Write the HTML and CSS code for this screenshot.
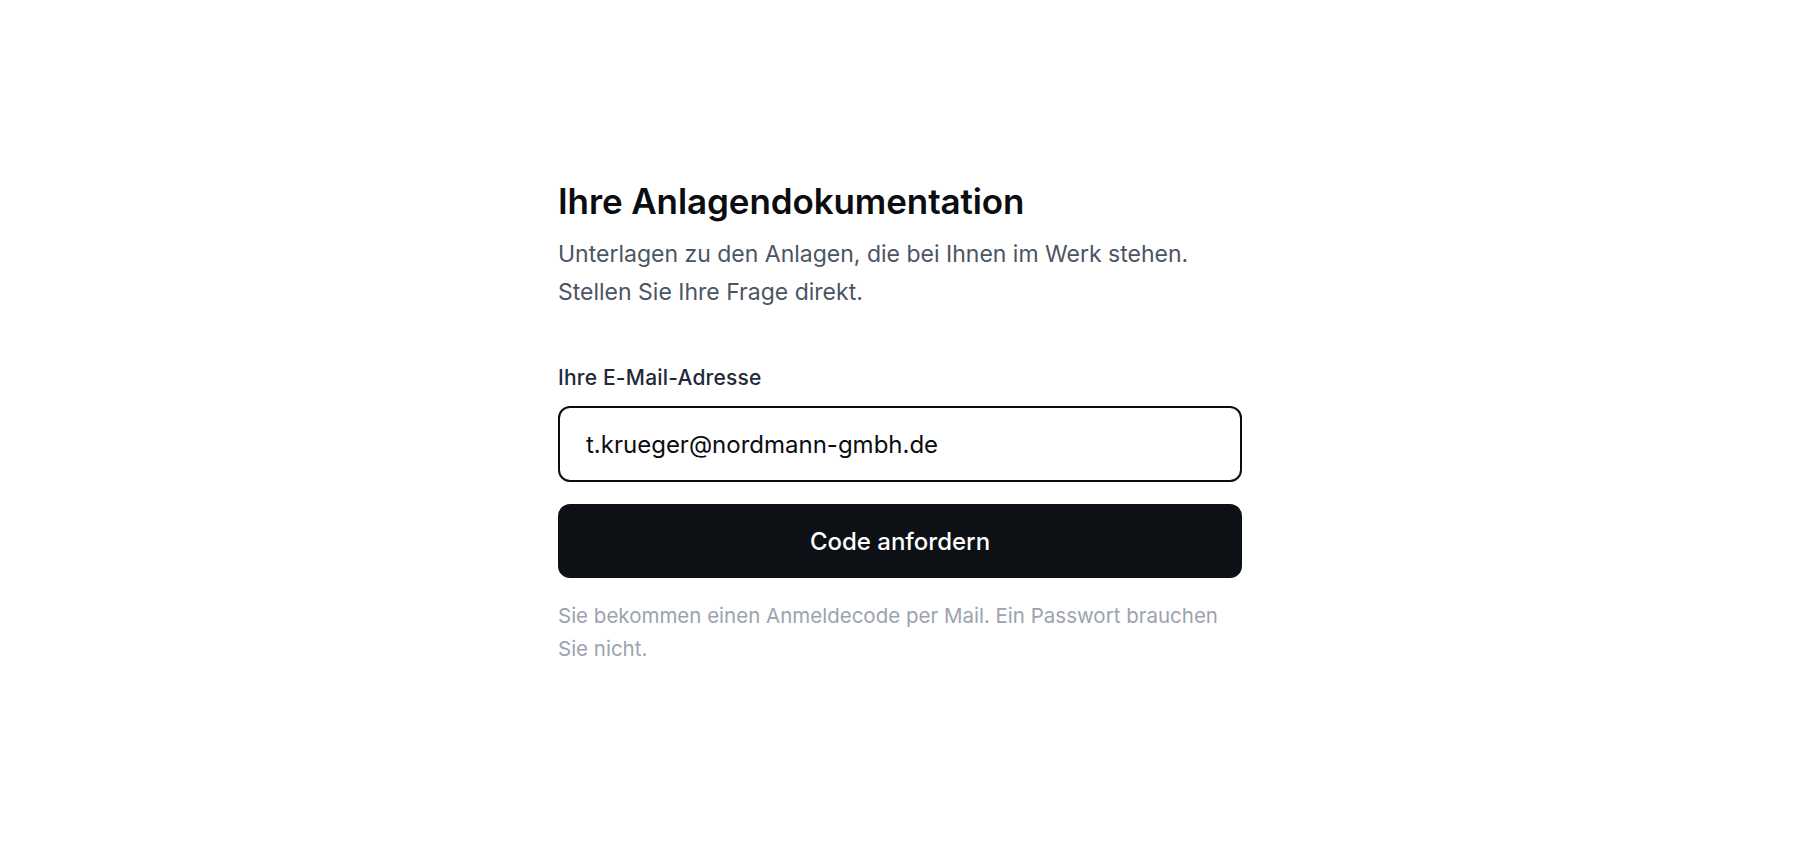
FILE: index.html
```html
<!DOCTYPE html>
<html lang="de">
<head>
<meta charset="utf-8">
<title>Ihre Anlagendokumentation</title>
<link rel="stylesheet" href="styles.css">
</head>
<body>
<main class="page">
  <section class="card">
    <h1 class="title">Ihre Anlagendokumentation</h1>
    <p class="lead">Unterlagen zu den Anlagen, die bei Ihnen im Werk stehen.<br>Stellen Sie Ihre Frage direkt.</p>
    <form class="form">
      <label class="label" for="email">Ihre E-Mail-Adresse</label>
      <input class="input" id="email" type="email" value="t.krueger@nordmann-gmbh.de">
      <button class="button" type="button">Code anfordern</button>
    </form>
    <p class="note">Sie bekommen einen Anmeldecode per Mail. Ein Passwort brauchen Sie nicht.</p>
  </section>
</main>
</body>
</html>
```

FILE: styles.css
```css
* { box-sizing: border-box; }
html, body { margin: 0; padding: 0; background: #ffffff; }
body {
  font-family: Inter, "Noto Sans", "Liberation Sans", sans-serif;
  color: #0b0d10;
}
.page {
  min-height: 100vh;
  display: flex;
  align-items: center;
  justify-content: center;
}
.card {
  width: 684px;
  display: flex;
  flex-direction: column;
}
.title {
  margin: 0 0 15px;
  font-size: 35px;
  line-height: 40px;
  font-weight: 600;
  color: #0b0d10;
  letter-spacing: -0.1px;
}
.lead {
  margin: 0;
  font-size: 23px;
  line-height: 37.5px;
  color: #4b5563;
}
.form {
  display: flex;
  flex-direction: column;
  margin-top: 53px;
}
.label {
  font-size: 21px;
  line-height: 28px;
  font-weight: 500;
  letter-spacing: 0.2px;
  color: #1f2937;
  margin-bottom: 14px;
}
.input {
  height: 76px;
  border: 2px solid #0b0d10;
  border-radius: 12px;
  padding: 0 26px;
  font-family: inherit;
  font-size: 24px;
  color: #0b0d10;
  background: #fff;
  outline: none;
}
.button {
  margin-top: 22px;
  height: 74px;
  border: 0;
  border-radius: 12px;
  background: #0d1014;
  color: #ffffff;
  font-family: inherit;
  font-size: 24px;
  font-weight: 500;
}
.note {
  margin: 21px 0 0;
  font-size: 20.5px;
  line-height: 33px;
  color: #9ca3af;
}
```
